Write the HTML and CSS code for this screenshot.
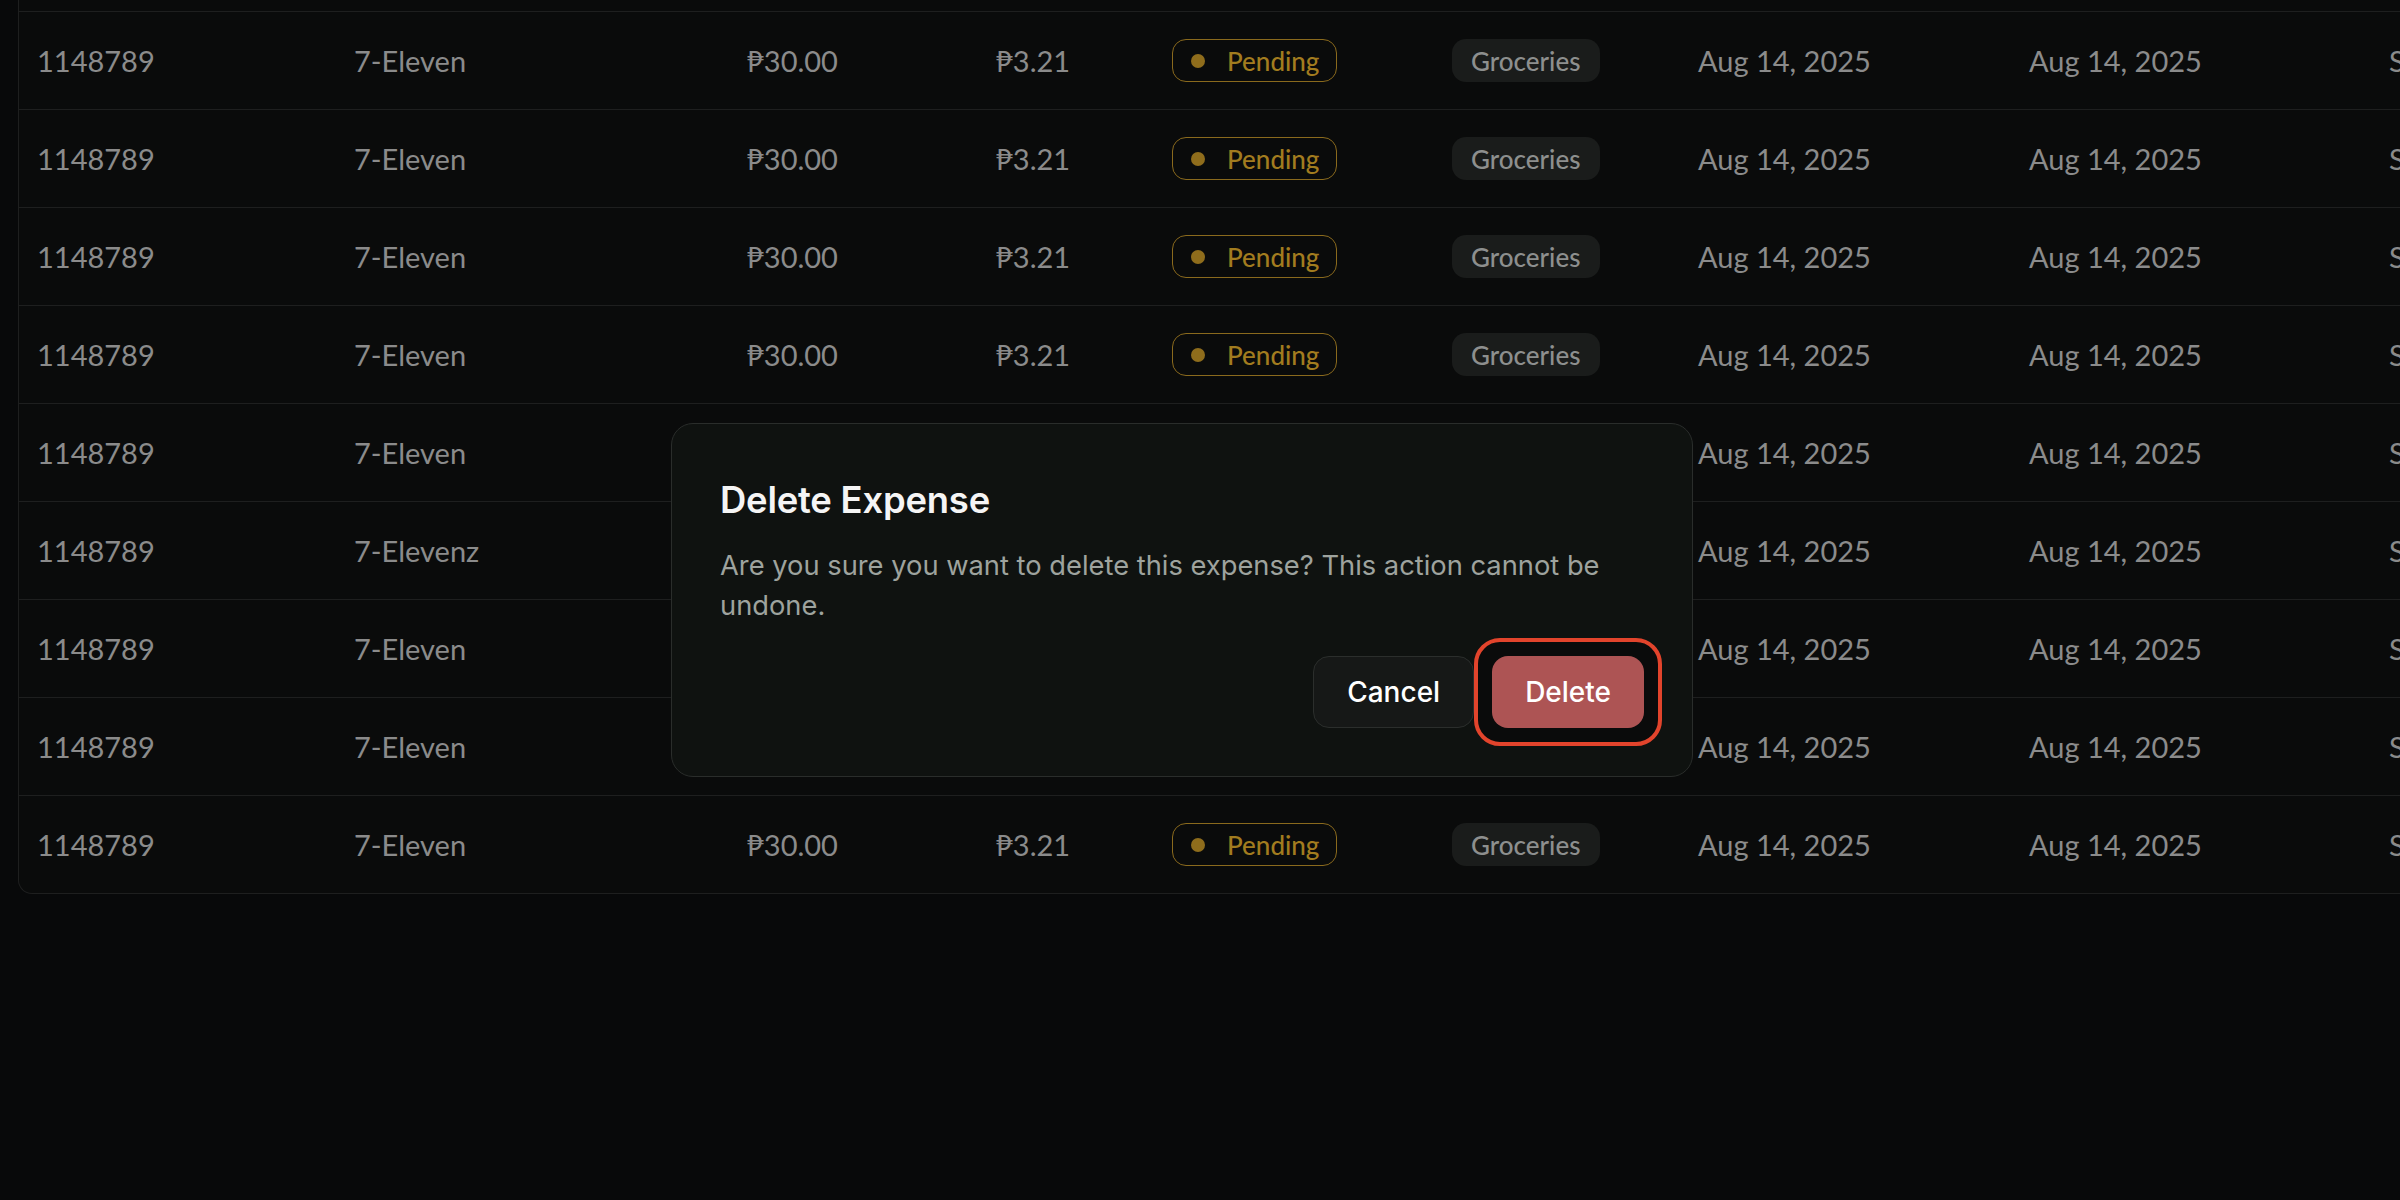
FILE: index.html
```html
<!DOCTYPE html>
<html lang="en">
<head>
<meta charset="utf-8">
<title>Expenses</title>
<link rel="stylesheet" href="styles.css">
</head>
<body>
<main class="page">
  <div class="table">
    <div class="row"><span class="cell">1148789</span><span class="cell">7-Eleven</span><span class="cell">₱30.00</span><span class="cell">₱3.21</span><span class="cell"><span class="badge badge-pending"><i class="dot"></i>Pending</span></span><span class="cell"><span class="badge badge-cat">Groceries</span></span><span class="cell">Aug 14, 2025</span><span class="cell">Aug 14, 2025</span><span class="cell">Submitted</span></div>
    <div class="row"><span class="cell">1148789</span><span class="cell">7-Eleven</span><span class="cell">₱30.00</span><span class="cell">₱3.21</span><span class="cell"><span class="badge badge-pending"><i class="dot"></i>Pending</span></span><span class="cell"><span class="badge badge-cat">Groceries</span></span><span class="cell">Aug 14, 2025</span><span class="cell">Aug 14, 2025</span><span class="cell">Submitted</span></div>
    <div class="row"><span class="cell">1148789</span><span class="cell">7-Eleven</span><span class="cell">₱30.00</span><span class="cell">₱3.21</span><span class="cell"><span class="badge badge-pending"><i class="dot"></i>Pending</span></span><span class="cell"><span class="badge badge-cat">Groceries</span></span><span class="cell">Aug 14, 2025</span><span class="cell">Aug 14, 2025</span><span class="cell">Submitted</span></div>
    <div class="row"><span class="cell">1148789</span><span class="cell">7-Eleven</span><span class="cell">₱30.00</span><span class="cell">₱3.21</span><span class="cell"><span class="badge badge-pending"><i class="dot"></i>Pending</span></span><span class="cell"><span class="badge badge-cat">Groceries</span></span><span class="cell">Aug 14, 2025</span><span class="cell">Aug 14, 2025</span><span class="cell">Submitted</span></div>
    <div class="row"><span class="cell">1148789</span><span class="cell">7-Eleven</span><span class="cell">₱30.00</span><span class="cell">₱3.21</span><span class="cell"><span class="badge badge-pending"><i class="dot"></i>Pending</span></span><span class="cell"><span class="badge badge-cat">Groceries</span></span><span class="cell">Aug 14, 2025</span><span class="cell">Aug 14, 2025</span><span class="cell">Submitted</span></div>
    <div class="row"><span class="cell">1148789</span><span class="cell">7-Elevenz</span><span class="cell">₱30.00</span><span class="cell">₱3.21</span><span class="cell"><span class="badge badge-pending"><i class="dot"></i>Pending</span></span><span class="cell"><span class="badge badge-cat">Groceries</span></span><span class="cell">Aug 14, 2025</span><span class="cell">Aug 14, 2025</span><span class="cell">Submitted</span></div>
    <div class="row"><span class="cell">1148789</span><span class="cell">7-Eleven</span><span class="cell">₱30.00</span><span class="cell">₱3.21</span><span class="cell"><span class="badge badge-pending"><i class="dot"></i>Pending</span></span><span class="cell"><span class="badge badge-cat">Groceries</span></span><span class="cell">Aug 14, 2025</span><span class="cell">Aug 14, 2025</span><span class="cell">Submitted</span></div>
    <div class="row"><span class="cell">1148789</span><span class="cell">7-Eleven</span><span class="cell">₱30.00</span><span class="cell">₱3.21</span><span class="cell"><span class="badge badge-pending"><i class="dot"></i>Pending</span></span><span class="cell"><span class="badge badge-cat">Groceries</span></span><span class="cell">Aug 14, 2025</span><span class="cell">Aug 14, 2025</span><span class="cell">Submitted</span></div>
    <div class="row"><span class="cell">1148789</span><span class="cell">7-Eleven</span><span class="cell">₱30.00</span><span class="cell">₱3.21</span><span class="cell"><span class="badge badge-pending"><i class="dot"></i>Pending</span></span><span class="cell"><span class="badge badge-cat">Groceries</span></span><span class="cell">Aug 14, 2025</span><span class="cell">Aug 14, 2025</span><span class="cell">Submitted</span></div>
  </div>
</main>
<div class="overlay">
  <div class="dialog" role="alertdialog" aria-labelledby="dlg-title">
    <h2 class="dialog-title" id="dlg-title">Delete Expense</h2>
    <p class="dialog-text">Are you sure you want to delete this expense? This action cannot be undone.</p>
    <div class="dialog-actions">
      <button class="btn btn-cancel" type="button">Cancel</button>
      <button class="btn btn-delete" type="button">Delete</button>
    </div>
  </div>
</div>
</body>
</html>
```
FILE: styles.css
```css
* { box-sizing: border-box; }

html, body {
  margin: 0;
  height: 100%;
}

body {
  background: #08090a;
  overflow: hidden;
  font-family: "Lato", "Noto Sans", sans-serif;
  color: #8b8b8b;
}

.page {
  padding-left: 18px;
}

.table {
  width: max-content;
  padding-top: 11px;
  background: #0a0b0b;
  border-left: 1px solid #1e1f1f;
  border-bottom: 1px solid #1e1f1f;
  border-bottom-left-radius: 14px;
}

.row {
  display: grid;
  grid-template-columns: 317px 393px 249px 176px 280px 246px 331px 360px 300px;
  align-items: center;
  height: 98px;
  border-bottom: 1px solid #1e1f1f;
  font-size: 29px;
  line-height: 36px;
}

.row:first-child {
  border-top: 1px solid #1e1f1f;
  height: 99px;
}

.row:last-child {
  border-bottom: 0;
  height: 97px;
}

.cell {
  padding-left: 18px;
  white-space: nowrap;
}

.badge {
  display: inline-flex;
  align-items: center;
  height: 43px;
  border-radius: 14px;
  font-size: 26px;
  font-weight: 500;
  vertical-align: middle;
}

.badge-pending {
  padding: 0 17px 0 18px;
  border: 1.5px solid #8a6a1d;
  color: #a27c1f;
  gap: 22px;
}

.dot {
  width: 14px;
  height: 14px;
  border-radius: 50%;
  background: #8f6d1c;
}

.badge-cat {
  padding: 0 19px;
  background: #1a1c1b;
  color: #8d8f8e;
}

.overlay {
  position: fixed;
  inset: 0;
  display: flex;
  align-items: center;
  justify-content: center;
  padding-right: 36px;
}

.dialog {
  position: relative;
  z-index: 0;
  width: 1022px;
  padding: 54px 48px 48px;
  background: #0f1210;
  border: 1px solid #2a2d2b;
  border-radius: 22px;
  font-family: "Inter", "Noto Sans", sans-serif;
}

.dialog-title {
  margin: 0;
  font-size: 36.4px;
  line-height: 44px;
  font-weight: 600;
  color: #f5f5f5;
  letter-spacing: -0.2px;
}

.dialog-text {
  margin: 24px 0 0;
  font-size: 27.3px;
  line-height: 40px;
  color: #9ea39e;
}

.dialog-actions {
  display: flex;
  justify-content: flex-end;
  gap: 18px;
  margin-top: 30px;
}

.btn {
  height: 72px;
  padding: 0 33px;
  border-radius: 16px;
  font-family: "Inter", "Noto Sans", sans-serif;
  font-size: 28px;
  font-weight: 500;
  color: #ffffff;
  cursor: pointer;
}

.btn-cancel {
  background: #161817;
  border: 1px solid #2b2e2c;
}

.btn-delete {
  position: relative;
  background: #ad5454;
  border: 0;
}

.btn-delete::before {
  content: "";
  position: absolute;
  inset: -18px;
  border: 4px solid #e2442c;
  border-radius: 26px;
  background: #0a0b0b;
  z-index: -1;
}
```
